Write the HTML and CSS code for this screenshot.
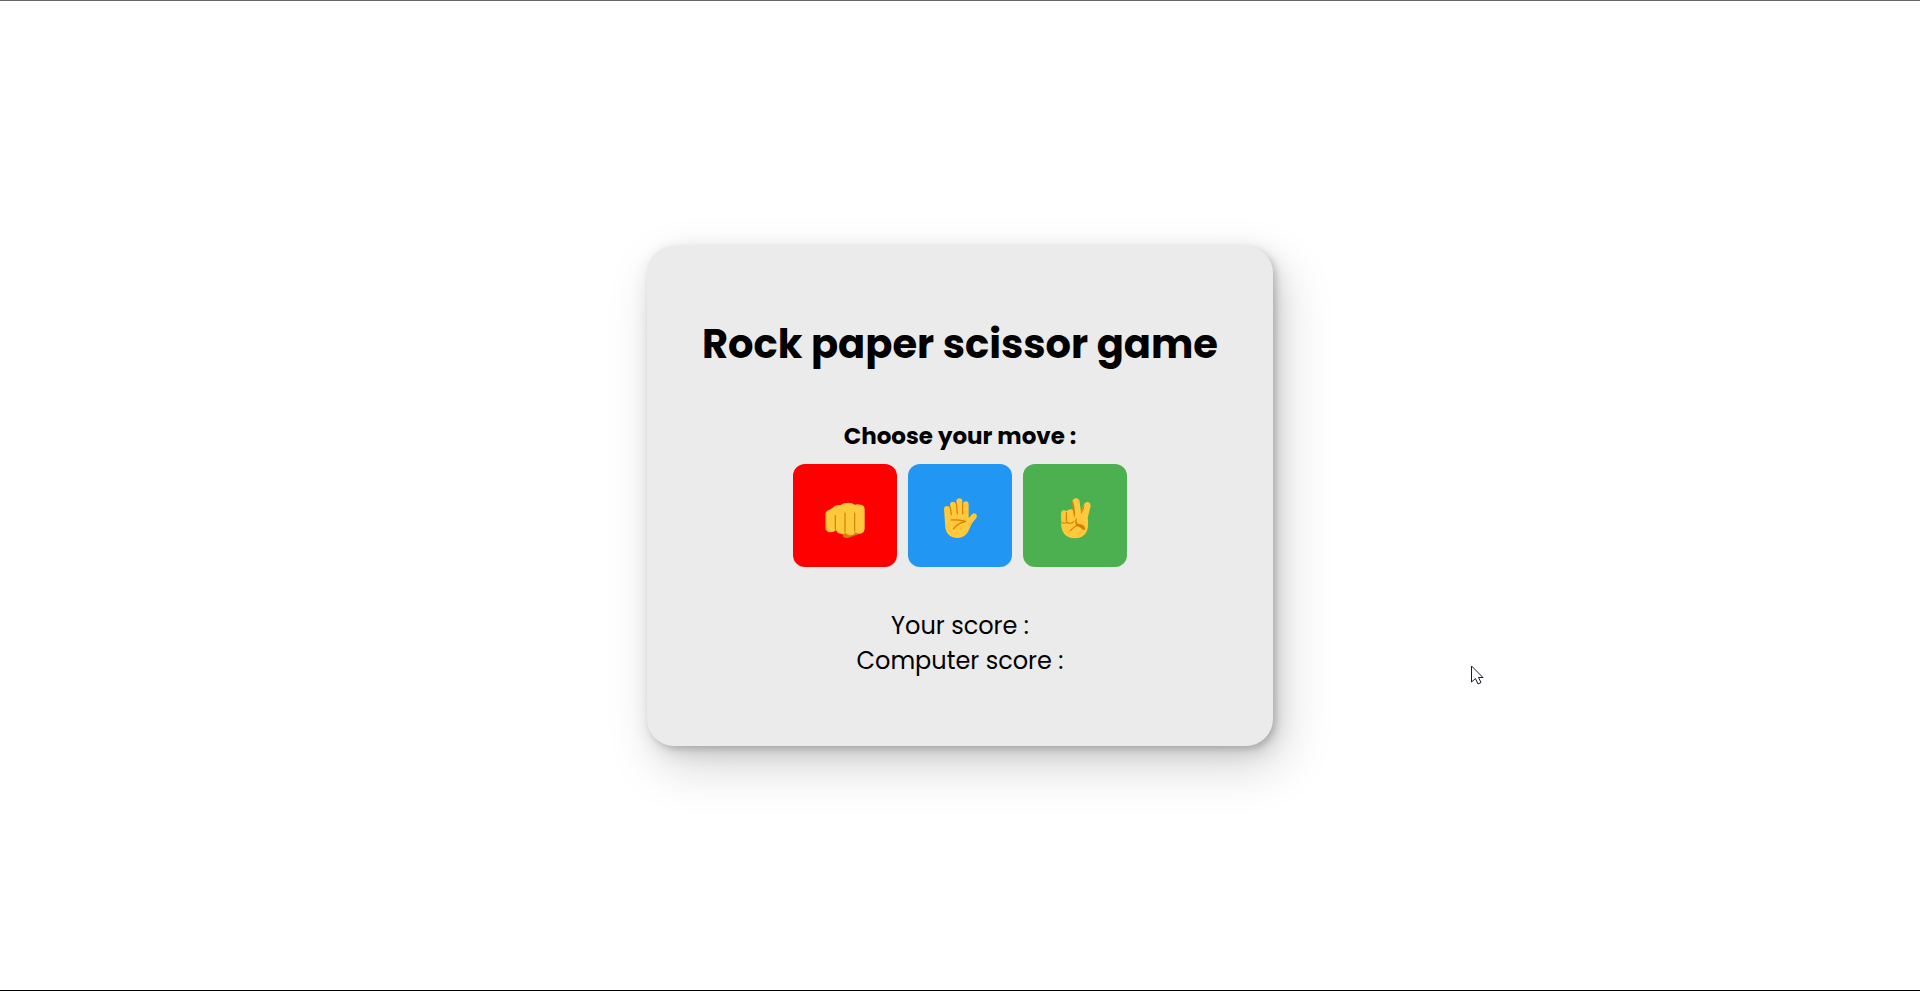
FILE: index.html
```html
<!DOCTYPE html>
<html lang="en">
<head>
<meta charset="utf-8">
<title>Rock paper scissor game</title>
<link rel="stylesheet" href="styles.css">
</head>
<body>
<main class="page">
  <section class="card">
    <h1 class="title">Rock paper scissor game</h1>
    <h2 class="prompt">Choose your move :</h2>
    <div class="moves">
      <button class="move rock" type="button" aria-label="Rock">
        <svg class="hand" viewBox="132 140 126 126" aria-hidden="true">
          <path fill="#d48100" d="M184 240L190 260Q200 265 210 261L234 252L250 246L240 230Z"/>
          <path fill="#ffc83d" d="M136 194Q136 181 148 178Q158 174 164 167Q171 163 182 164Q190 157 206 157Q218 157 224 163Q232 161 243 163Q254 165 254 177V234Q254 249 240 250Q231 251 226 246Q221 256 209 255Q200 254 197 248Q190 252 182 250Q171 248 168 239Q162 247 150 246Q138 244 136 232Z"/>
          <path fill="none" stroke="#d48100" stroke-width="3.5" stroke-linecap="round" d="M166 196V237M195 188V245M224 188V243M137 190Q136 218 138 235"/>
          <path fill="none" stroke="#e59a13" stroke-width="1.5" d="M168 239Q172 250 184 250M197 248Q203 257 214 254M227 247Q236 252 247 247"/>
        </svg>
      </button>
      <button class="move paper" type="button" aria-label="Paper">
        <svg class="hand" viewBox="132 140 126 126" aria-hidden="true">
          <path fill="#ffc83d" d="M147 176Q147 167 156 167Q164 167 166 174L165 162Q166 154 174 154Q182 154 184 162V152Q185 144 193 144Q202 144 202 153V161Q205 153 213 153Q221 154 221 163V203L229 194Q235 186 242 190Q248 195 244 203L231 219L220 243Q210 263 187 263Q165 263 155 246Q150 236 150 219Z"/>
          <path fill="none" stroke="#d67d00" stroke-width="3.5" stroke-linecap="round" stroke-linejoin="round" d="M166 171L169 193M184 158L187 190M203 158V190M168 209Q190 208 212 213Q187 219 175 236"/>
        </svg>
      </button>
      <button class="move scissor" type="button" aria-label="Scissor">
        <svg class="hand" viewBox="132 140 126 126" aria-hidden="true">
          <path fill="#ffc83d" d="M153 191Q153 181 162 180Q167 180 170 183Q174 177 182 177Q187 177 190 180L187 154Q188 145 198 144Q208 145 209 154L213 185L221 163Q225 154 234 155Q243 158 242 168L233 202Q235 211 234 228Q231 263 193 264Q158 262 154 228Z"/>
          <path fill="#d67d00" d="M189 150Q186 153 187 161L189 182L193 205L195 188L192 164Q190 158 189 150ZM223 160L213 186V192L222 174ZM153 211Q155 217 163 217Q168 217 171 213Q175 218 182 217Q190 216 193 209Q194 219 183 220Q175 221 171 218Q163 223 155 218ZM196 207Q193 218 203 222Q216 221 227 237L221 240Q210 228 199 227L198 223Q193 216 196 207Z"/>
          <path fill="none" stroke="#d67d00" stroke-width="3.5" stroke-linecap="round" d="M169 187V211M204 223Q193 228 181 241M199 206Q195 216 205 223Q220 223 223 233"/>
        </svg>
      </button>
    </div>
    <div class="scores">
      <p class="score">Your score :</p>
      <p class="score">Computer score :</p>
    </div>
  </section>
  <svg class="pointer" viewBox="0 0 13 21" aria-hidden="true">
    <path fill="#fff" stroke="#1a1a2a" stroke-width="1" d="M.5 1V17L4.500 13.500L7 19L10 17.500L7.500 12.500H12Z"/>
  </svg>
</main>
</body>
</html>
```
FILE: styles.css
```css
* {
  box-sizing: border-box;
  margin: 0;
}

body {
  font-family: Poppins, Inter, "Open Sans", sans-serif;
  color: #000;
  background: #fff;
}

.page {
  position: relative;
  display: flex;
  align-items: center;
  justify-content: center;
  min-height: 100vh;
  border-top: 1px solid #666;
  border-bottom: 1px solid #000;
}

.card {
  display: flex;
  flex-direction: column;
  align-items: center;
  padding: 68px 55px;
  border-radius: 27px;
  background: #ebebeb;
  box-shadow: 3px 3px 6px rgba(0, 0, 0, 0.16), 4px 6px 20px rgba(0, 0, 0, 0.12), 10px 20px 50px rgba(0, 0, 0, 0.17);
  text-align: center;
}

.title {
  font-size: 40px;
  line-height: 60px;
  font-weight: 700;
}

.prompt {
  margin-top: 44px;
  font-size: 23px;
  line-height: 36px;
  font-weight: 700;
}

.moves {
  display: flex;
  gap: 11px;
  margin-top: 10px;
}

.move {
  width: 104px;
  height: 103px;
  padding: 33px 31px 28px;
  border: 0;
  border-radius: 12px;
  cursor: pointer;
}

.rock {
  background: #ff0000;
}

.paper {
  background: #2196f3;
}

.scissor {
  background: #4caf50;
}

.hand {
  display: block;
  width: 42px;
  height: 42px;
}

.scores {
  margin-top: 41px;
}

.score {
  font-size: 24px;
  line-height: 35px;
}

.pointer {
  position: absolute;
  top: 664px;
  left: 1471px;
  width: 13px;
  height: 21px;
}
```
